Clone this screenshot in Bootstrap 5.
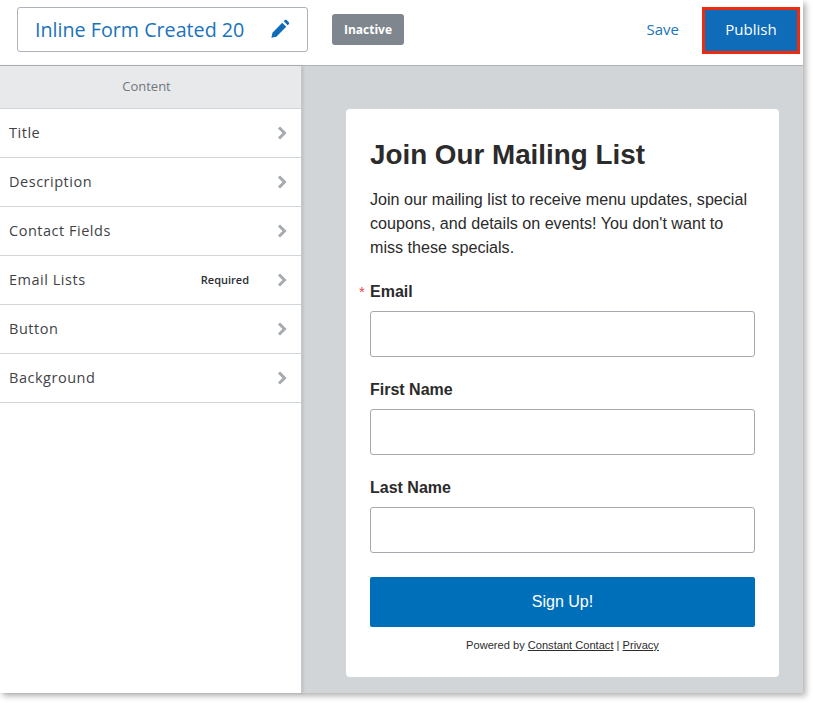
<!DOCTYPE html>
<html lang="en"><head><meta charset="utf-8"><title>Inline Form</title>
<link href="https://cdn.jsdelivr.net/npm/bootstrap@5.3.0/dist/css/bootstrap.min.css" rel="stylesheet">
<style>
html,body{margin:0;height:703px;overflow:hidden;background:#fff}
body{font-family:"Open Sans","Noto Sans",sans-serif}
.app-frame{width:803px;height:693px;box-shadow:3px 3px 6px rgba(0,0,0,.3);background:#fff}
.top-strip{height:66px;border-bottom:1px solid #b0b4b8;padding:0 3px 6px 17px}
.name-box{width:291px;height:45px;border:1px solid #adb2b8;border-radius:3px;padding:0 17px;color:#1a73ba;font-size:19.700px}
.state-pill{width:72px;height:31px;margin-left:24px;background:#80868e;color:#fff;border-radius:3px;font-size:12px;font-weight:700}
.save-link{color:#1a73ba;font-size:15px;text-decoration:none;margin-right:23px}
.pub-btn{width:98px;height:47px;background:#0f6cb9;border:3px solid #f02a0d;border-radius:0;color:#fff;font-size:15px;padding:0 0 2px;margin-top:2px}
.work-area{height:627px}
.side-col{width:302px;border-right:1px solid #c5c8cc;box-shadow:1px 0 3px rgba(0,0,0,.12);position:relative}
.side-head{height:43px;background:#e8e9eb;border-bottom:1px solid #d2d5d8;color:#71767c;font-size:13px;padding-right:8px}
.side-row{height:49px;border-bottom:1px solid #d2d5d8;padding:0 14px 0 9px;color:#3f4347;font-size:14.500px;letter-spacing:.52px}
.need-tag{font-size:11px;font-weight:600;color:#2a2e33;margin-right:28px;letter-spacing:0}
.preview-pane{background:#d1d5d8;padding:43px 24px 16px 44px}
.form-sheet{width:433px;height:568px;border-radius:4px;padding:24px;background:#fff;font-family:"Liberation Sans",Arial,sans-serif;color:#2b2b2b}
.form-title{font-size:27.800px;font-weight:700;line-height:42px;margin:1px 0 11px}
.form-text{font-size:16.130px;line-height:24px;margin:0 0 21px;color:#2b2b2b}
.field-label{display:block;font-size:16px;font-weight:700;line-height:24px;margin-bottom:7px;position:relative}
.req-star{position:absolute;left:-11px;top:0;color:#f2454d;font-size:15px;font-weight:400}
.field-input{display:block;width:385px;height:46px;border:1px solid #a6a9ad;border-radius:3px;margin-bottom:21px;background:#fff}
.sign-btn{width:385px;height:50px;background:#006fba;color:#fff;border:0;border-radius:2px;font-size:16px;margin-top:24px;display:block}
.form-foot{font-size:11.100px;text-align:center;margin-top:10px;line-height:16px}
.form-foot a{color:#2b2b2b}
</style></head>
<body>
<div class="app-frame">
  <div class="top-strip d-flex align-items-center">
    <div class="name-box d-flex align-items-center justify-content-between"><span>Inline Form Created 20</span>
      <svg width="21" height="21" viewBox="0 0 20 20" aria-hidden="true"><path fill="#0f6cb9" d="M12.600 3.600l3.800 3.800L7 16.800l-4.700 1 1-4.800zM14 2.200l1-1c.6-.6 1.400-.6 2 0l1.800 1.800c.6.600.6 1.400 0 2l-1 1z"/></svg>
    </div>
    <div class="state-pill d-flex align-items-center justify-content-center">Inactive</div>
    <div class="ms-auto d-flex align-items-center">
      <a class="save-link" href="#">Save</a>
      <button class="pub-btn" type="button">Publish</button>
    </div>
  </div>
  <div class="work-area d-flex">
    <div class="side-col flex-shrink-0">
      <div class="side-head d-flex align-items-center justify-content-center">Content</div>
      <div class="side-row d-flex align-items-center"><span>Title</span><svg class="ms-auto" width="10" height="14" viewBox="0 0 10 14"><path d="M2 1.500L7.500 7 2 12.500" fill="none" stroke="#a6abb0" stroke-width="3"/></svg></div>
      <div class="side-row d-flex align-items-center"><span>Description</span><svg class="ms-auto" width="10" height="14" viewBox="0 0 10 14"><path d="M2 1.500L7.500 7 2 12.500" fill="none" stroke="#a6abb0" stroke-width="3"/></svg></div>
      <div class="side-row d-flex align-items-center"><span>Contact Fields</span><svg class="ms-auto" width="10" height="14" viewBox="0 0 10 14"><path d="M2 1.500L7.500 7 2 12.500" fill="none" stroke="#a6abb0" stroke-width="3"/></svg></div>
      <div class="side-row d-flex align-items-center"><span>Email Lists</span><span class="need-tag ms-auto">Required</span><svg width="10" height="14" viewBox="0 0 10 14"><path d="M2 1.500L7.500 7 2 12.500" fill="none" stroke="#a6abb0" stroke-width="3"/></svg></div>
      <div class="side-row d-flex align-items-center"><span>Button</span><svg class="ms-auto" width="10" height="14" viewBox="0 0 10 14"><path d="M2 1.500L7.500 7 2 12.500" fill="none" stroke="#a6abb0" stroke-width="3"/></svg></div>
      <div class="side-row d-flex align-items-center"><span>Background</span><svg class="ms-auto" width="10" height="14" viewBox="0 0 10 14"><path d="M2 1.500L7.500 7 2 12.500" fill="none" stroke="#a6abb0" stroke-width="3"/></svg></div>
    </div>
    <div class="preview-pane flex-grow-1">
      <div class="form-sheet">
        <h1 class="form-title">Join Our Mailing List</h1>
        <p class="form-text">Join our mailing list to receive menu updates, special coupons, and details on events! You don't want to miss these specials.</p>
        <label class="field-label"><span class="req-star">*</span>Email</label>
        <input class="field-input" type="text" aria-label="Email">
        <label class="field-label">First Name</label>
        <input class="field-input" type="text" aria-label="First Name">
        <label class="field-label">Last Name</label>
        <input class="field-input" type="text" aria-label="Last Name">
        <button class="sign-btn" type="button">Sign Up!</button>
        <div class="form-foot">Powered by <a href="#">Constant Contact</a> | <a href="#">Privacy</a></div>
      </div>
    </div>
  </div>
</div>
</body></html>
